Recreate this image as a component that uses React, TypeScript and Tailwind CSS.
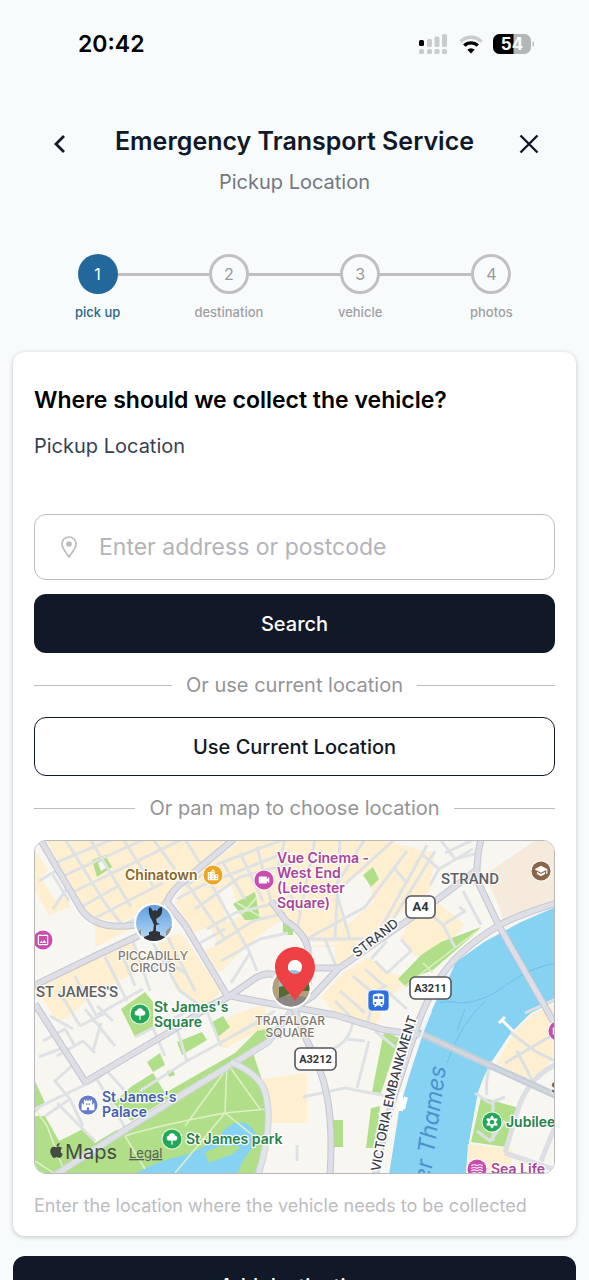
import { FaApple } from "react-icons/fa";
import {
  MdCastle,
  MdFilterVintage,
  MdLocationCity,
  MdOutlineImage,
  MdSchool,
  MdTrain,
  MdVideocam,
  MdWaves,
} from "react-icons/md";
import type { ComponentType, SVGProps } from "react";

const STEPS = ["pick up", "destination", "vehicle", "photos"];

function StatusBar() {
  return (
    <div className="flex flex-row justify-between items-center h-22 pl-[78px] pr-[54px]">
      <span className="text-[23px] font-semibold text-black">20:42</span>
      <div className="flex flex-row items-center gap-2.5">
        <svg width="30" height="20" viewBox="0 0 30 20" fill="#c9cccd">
          <rect x="0" y="6" width="5" height="6" rx="1.5" fill="#000" />
          <rect x="8" y="5" width="5" height="8" rx="1.5" />
          <rect x="15.5" y="2.5" width="5" height="10.5" rx="1.5" />
          <rect x="23" y="0" width="5" height="13" rx="1.5" />
          <rect x="0" y="15" width="5" height="5" rx="1.5" />
          <rect x="8" y="15" width="5" height="5" rx="1.5" />
          <rect x="15.5" y="15" width="5" height="5" rx="1.5" />
          <rect x="23" y="15" width="5" height="5" rx="1.5" />
        </svg>
        <svg width="24" height="19" viewBox="0 0 24 19" fill="none">
          <path d="M1.5 6.5a15 15 0 0 1 21 0" stroke="#c9cccd" strokeWidth="3.4" />
          <path d="M5.3 10.6a9.5 9.5 0 0 1 13.4 0" stroke="#000" strokeWidth="3.4" />
          <path d="M12 18.6l-3.7-3.9a5.3 5.3 0 0 1 7.4 0z" fill="#000" />
        </svg>
        <svg width="42" height="20" viewBox="0 0 42 20">
          <defs>
            <clipPath id="battery">
              <rect width="38" height="20" rx="6.5" />
            </clipPath>
          </defs>
          <g clipPath="url(#battery)">
            <rect width="38" height="20" fill="#b4b7b8" />
            <rect width="20.5" height="20" fill="#000" />
          </g>
          <path d="M39.5 7v6c2-.6 2-5.4 0-6z" fill="#b4b7b8" />
          <text
            x="19"
            y="16"
            textAnchor="middle"
            fontSize="17"
            fontWeight="700"
            fill="#fff"
          >
            54
          </text>
        </svg>
      </div>
    </div>
  );
}

function Header() {
  return (
    <header className="flex flex-row justify-between items-start px-12 pt-9">
      <button type="button" aria-label="Back" className="pt-2">
        <svg width="24" height="24" viewBox="0 0 24 24" fill="none">
          <path d="M16 4L8 12l8 8" stroke="#111827" strokeWidth="2.8" />
        </svg>
      </button>
      <div className="flex flex-col items-center gap-2">
        <h1 className="text-[25px] leading-[34px] font-semibold text-[#111827]">
          Emergency Transport Service
        </h1>
        <p className="text-xl leading-8 text-[#737880]">Pickup Location</p>
      </div>
      <button type="button" aria-label="Close" className="pt-2">
        <svg width="24" height="24" viewBox="0 0 24 24" fill="none">
          <path d="M3.5 3.5l17 17M20.5 3.5l-17 17" stroke="#111827" strokeWidth="2.4" />
        </svg>
      </button>
    </header>
  );
}

function Stepper() {
  return (
    <ol className="grid grid-cols-4 px-8 pt-14">
      {STEPS.map((step, i) => (
        <li key={step} className="flex flex-col items-center gap-2">
          <div className="flex flex-row items-center w-full">
            <span
              className={
                i === 0 ? "flex-1 h-[3px]" : "flex-1 h-[3px] bg-[#c0bfc4]"
              }
            />
            <span
              className={
                i === 0
                  ? "flex items-center justify-center size-10 rounded-full text-base text-white bg-[#22689a]"
                  : "flex items-center justify-center size-10 rounded-full text-base text-[#98989a] border-3 border-[#c0bfc4]"
              }
            >
              {i + 1}
            </span>
            <span
              className={
                i === STEPS.length - 1
                  ? "flex-1 h-[3px]"
                  : "flex-1 h-[3px] bg-[#c0bfc4]"
              }
            />
          </div>
          <span
            className={
              i === 0
                ? "text-[13px] leading-5 font-medium text-[#2a6687]"
                : "text-[13px] leading-5 font-medium text-[#a0a0a2]"
            }
          >
            {step}
          </span>
        </li>
      ))}
    </ol>
  );
}

function Divider({ label }: { label: string }) {
  return (
    <div className="flex flex-row items-center gap-3.5 h-16">
      <span className="flex-1 h-px bg-[#bdbdbf]" />
      <span className="text-xl text-[#949496]">{label}</span>
      <span className="flex-1 h-px bg-[#bdbdbf]" />
    </div>
  );
}

type IconProps = SVGProps<SVGSVGElement> & { size?: number };

function Tree({ size, color, ...rest }: IconProps) {
  return (
    <svg {...rest} width={size} height={size} viewBox="0 0 24 24" fill={color}>
      <path d="M12 2C8.5 2 7 4.5 7 6C4 6.5 2.5 8.5 3 11.5C3.5 14 5.5 15 8 14.5L11 15V22H13V15L16 14.5C18.5 15 20.5 14 21 11.5C21.5 8.5 20 6.5 17 6C17 4.5 15.5 2 12 2Z" />
    </svg>
  );
}

type PoiProps = {
  x: number;
  y: number;
  color: string;
  icon: ComponentType<IconProps>;
};

function Poi({ x, y, color, icon: Icon }: PoiProps) {
  return (
    <g>
      <circle cx={x} cy={y} r="10.5" fill="#fff" opacity="0.8" />
      <circle cx={x} cy={y} r="9.5" fill={color} />
      <Icon x={x - 7} y={y - 7} size={14} color="#fff" />
    </g>
  );
}

type LabelProps = {
  x: number;
  y: number;
  lines: string[];
  color: string;
};

function PlaceLabel({ x, y, lines, color }: LabelProps) {
  return (
    <text
      fontSize="14"
      fontWeight="600"
      fill={color}
      stroke="#fff"
      strokeWidth="2.5"
      strokeOpacity="0.85"
      paintOrder="stroke"
    >
      {lines.map((line, i) => (
        <tspan key={line} x={x} y={y + i * 15}>
          {line}
        </tspan>
      ))}
    </text>
  );
}

function AreaLabel({ x, y, lines }: Omit<LabelProps, "color">) {
  return (
    <text
      fontSize="12"
      fontWeight="500"
      fill="#7d7972"
      textAnchor="middle"
      stroke="#fff"
      strokeWidth="2"
      strokeOpacity="0.8"
      paintOrder="stroke"
    >
      {lines.map((line, i) => (
        <tspan key={line} x={x} y={y + i * 12}>
          {line}
        </tspan>
      ))}
    </text>
  );
}

type RoadShieldProps = {
  x: number;
  y: number;
  width: number;
  name: string;
};

function RoadShield({ x, y, width, name }: RoadShieldProps) {
  return (
    <g>
      <rect x={x} y={y} width={width} height="22" rx="5" fill="#fff" stroke="#55565a" strokeWidth="1.6" />
      <text
        x={x + width / 2}
        y={y + 15}
        textAnchor="middle"
        fontFamily="Roboto, sans-serif"
        fontSize={name.length > 2 ? 11 : 13}
        fontWeight="700"
        fill="#333438"
      >
        {name}
      </text>
    </g>
  );
}

const MAJOR_ROADS = [
  "M5-2L46 68C58 86 80 87 100 84L117 78L132 61Q136 50 150 39L199-2",
  "M-2 145L60 115L103 95L117 82",
  "M131 60L150 84L193 156",
  "M190 154L232 162L262 167L300 174L349 189L384 194",
  "M50 241L143 186L175 165L193 156L222 136Q240 128 246 141",
  "M0 163L51 242",
  "M258 165L272 200Q287 228 292 255Q298 285 295 335",
  "M262 165L278 155L303 128L369 82L403 58L443 28",
  "M446-2Q440 25 443 41L463 83L521 185",
  "M522 62Q480 75 463 85Q425 108 407 134Q392 158 384 180Q372 215 356 265Q346 305 340 335",
  "M236 60L251 80Q270 92 273 108L273 145",
  "M275 127H303",
];

const STREETS = [
  "M30-2L70 62L86 82M55-2L96 66M88-2L118 45M118-2L140 28M150-2L165 22M20 22L78-2M28 35L110-2M36 52L148-2M46 66L85 44M58 78L128 42M92 82L130 66",
  "M18 68L34 44M34 60L18 34M4 40L24 28",
  "M150 45L185 22L250-2M142 58L168 44L255 10M160 68L205 36L258 22M172 88L200 72L250 60M180 104L218 80L250 72M186 120L225 98L253 92M196 142L215 112M215 112L222 130M150 40L190 98M170 32L215 112M188 22L210 58M205 12L228 60M222 6L236 60M165 102L190 88",
  "M250-2L242 30L262 66M280-2L262 88M305-2L300 98M330-2L300 46L315 98M360-2L300 52M372 10L330 66L272 98M392 4L340 98M400 10L352 88L316 108M300 98H272M302 128L290 98H330",
  "M405-2L420 18L443 12M410 12L440-2M388 14L404 28L438 8M395 44L404 28M360 28L372 42M392 70L408 84L430 70L424 66M408 84L420 106M428 50L446 84",
  "M352 100L336 118M340 120L352 132L376 110L366 98M330 128L350 146M318 135L338 152L352 144M305 150L330 172M300 160L318 178M340 152L332 184M352 150L372 168",
  "M40 135L62 176M70 116L92 160M85 108L100 145M60 175L108 148M24 150L45 185M45 185L70 172M98 100L115 150M118 102L145 150L170 168M132 95L160 150M50 168L80 205M62 165L78 180M112 130L132 120L150 132",
  "M15 175L38 188M8 200L30 188L40 205M22 215L48 200L60 212M66 182L58 210M4 216L25 208M62 238L72 230L90 250M35 258L20 240L40 222M0 268L62 238M10 275L35 258L48 285M22 262L60 300M62 238L92 290",
  "M100 196L118 187L130 215M118 187L150 172M140 182L152 220L196 196M170 166L186 205M152 220L105 250M196 196L240 170M226 180L196 196",
  "M300 174L318 180Q315 200 298 208L290 230M310 198L330 200M334 200L322 247M268 256L310 247L352 255M262 304V320M340 190L360 206",
];

const SOUTH_BANK_STREETS = [
  "M476 192L500 210L524 222M470 222L524 190M456 220Q450 240 452 254M500 245L482 210M521 158L490 172",
  "M440 252L455 262L470 256M442 290L455 300L470 280M458 262V300",
];

const PARK_PATHS = [
  "M192 222L190 272L140 332M190 272Q120 285 90 295M90 295L110 328M192 222L225 268M190 272L232 268M190 272L225 300M0 268L12 285L30 332M20 332L60 312M0 320L22 334M150 285L190 230",
  "M206 74L222 56M202 62L226 76",
  "M370 145L442 90M388 122L398 132",
];

function LocationMap() {
  return (
    <div className="rounded-xl border border-[#b9b9bb] overflow-hidden">
      <svg viewBox="0 0 519 332" className="block w-full h-auto" fill="none">
        <defs>
          <linearGradient id="sky" x1="0" y1="0" x2="0" y2="1">
            <stop offset="0" stopColor="#5c9ce0" />
            <stop offset="1" stopColor="#bcdcf4" />
          </linearGradient>
          <clipPath id="circus">
            <circle cx="119" cy="82" r="18" />
          </clipPath>
          <clipPath id="trafalgar">
            <circle cx="256" cy="147" r="18.5" />
          </clipPath>
          <path id="embankment" d="M345 331C353 285 362 235 385 168" />
        </defs>

        <rect width="520" height="332" fill="#f8f6f1" />

        {/* built-up blocks */}
        <g fill="#fdefd0">
          <path d="M12 0H192L134 56L118 70L88 80L60 78L46 62L28 30Z" />
          <path d="M0 10L22 42L36 66L14 74L0 50Z" />
          <path d="M204 0H300L350 0L400 12L395 50L345 88L318 104L272 100L250 76L222 96L184 132L140 62L150 44Z" />
          <path d="M300 104L330 92L312 120L304 126H278V104Z" />
          <path d="M374 82L404 62L430 84L412 104L380 116L366 96Z" />
          <path d="M308 132L340 112L352 132L376 136L352 160L340 186L300 172L286 156Z" />
          <path d="M0 148L98 100L112 126L60 152L38 172L24 182Z" />
          <path d="M122 100L146 92L186 150L172 166L140 148Z" />
          <path d="M195 175L228 164L236 184L188 208L180 196Z" />
          <path d="M228 238L272 232V282H236Z" />
          <path d="M60 82L96 88L60 106Z" />
        </g>
        <g fill="#f8f6f1">
          <path d="M6 36L20 24L34 46L20 60Z" />
          <path d="M184 50L196 44L206 74L192 82Z" />
          <path d="M222 100L268 98L270 142L240 128L214 142L196 148Z" />
          <path d="M300 48L330 30L340 60L312 84Z" />
          <path d="M276 106H300V124H276Z" />
          <path d="M326 112L346 100L366 106L350 128Z" />
          <path d="M150 94L176 86L182 104L162 112Z" />
          <path d="M395 36L440 12L446 60L424 74L404 56Z" />
        </g>
        <path d="M462 60L446 26L452 0H521V60L468 78Z" fill="#f5eadb" />
        <path d="M452 0H500L470 20L450 34L446 26Z" fill="#f8f6f1" />

        {/* parks */}
        <g fill="#b1df89">
          <path d="M57 19L70 14L77 26L62 36Z" />
          <path d="M198 63L220 51L225 79L210 79Z" />
          <path d="M328 34L338 26L344 38L336 46Z" />
          <path d="M248 80L258 84V94H248Z" />
          <path d="M363 138L386 114L406 101L446 86L436 96L398 129L385 134L371 146Z" />
          <path d="M86 168L110 151L118 161V186L100 196Z" />
          <path d="M142 201L167 191L172 199L147 214Z" />
          <path d="M175 182L188 175L195 186L183 196Z" />
          <path d="M112 221L125 212L130 224L118 231Z" />
          <path d="M97 245L118 232L130 252L200 212L222 190L238 186L240 196L200 218L96 280L78 262Z" />
          <path d="M0 240L10 262L0 272Z" />
          <path d="M0 275L10 275L24 300L52 286L90 290L200 220L216 206L227 239L235 276L222 334H0Z" />
          <path d="M349 190L364 197L346 252L337 251Z" />
          <path d="M336 267L345 265L341 307L331 307Z" />
          <path d="M298 279L308 279V306H298Z" />
        </g>
        <path d="M63 22L69 19L73 26L66 30Z" fill="#f8f6f1" />
        <path d="M48 286L78 262L90 284L60 302Z" fill="#f8f6f1" />
        <path d="M132 230L138 228L140 234L134 236Z" fill="#b1df89" />

        {/* lake */}
        <path
          d="M98 334Q120 320 150 314Q178 304 188 290Q200 278 212 283Q224 290 220 304Q208 316 202 334Z"
          fill="#86d2f2"
        />
        <path d="M170 312Q184 302 206 306L196 314Q182 318 174 322Z" fill="#b1df89" />

        {/* roads */}
        <g stroke="#dfe2e5" strokeWidth="3" strokeLinejoin="round">
          {STREETS.map((d) => (
            <path key={d} d={d} />
          ))}
        </g>
        <g stroke="#dff0c9" strokeWidth="1.5">
          {PARK_PATHS.map((d) => (
            <path key={d} d={d} />
          ))}
        </g>
        <path d="M20 334L90 289L233 201L258 168" stroke="#cfd3d9" strokeWidth="7" />
        <path d="M20 334L90 289L233 201L258 168" stroke="#dee1e6" strokeWidth="5" />
        <path d="M196 221Q222 232 229 248Q240 280 223 334" stroke="#cfd3d9" strokeWidth="7" />
        <path d="M196 221Q222 232 229 248Q240 280 223 334" stroke="#e1e4e9" strokeWidth="5" />

        {/* river and south bank */}
        <path
          d="M521 66L486 81L449 101L421 121L413 138Q396 165 385 202Q372 240 364 270L354 334H431L434 302L443 252Q448 236 456 222L476 192L496 172L521 160Z"
          fill="#86d2f2"
        />
        <path d="M521 122C480 130 470 150 446 158C425 166 415 158 405 162M450 160Q424 185 412 222M430 168L422 190" stroke="#6cc0e6" strokeWidth="1" />
        <path d="M476 192L496 172L521 160V334H431L434 302L443 252Q448 236 456 222Z" fill="#f8f6f1" />
        <path d="M478 192L498 173L521 163V212L498 244L462 222Z" fill="#fdefd0" />
        <path d="M433 303L478 308L474 334H431Z" fill="#fdefd0" />
        <path d="M446 256L484 267L471 306L436 301Z" fill="#b1df89" />
        <g stroke="#dcdfe3" strokeWidth="3">
          {SOUTH_BANK_STREETS.map((d) => (
            <path key={d} d={d} />
          ))}
          <path d="M524 222Q492 236 482 272Q474 298 470 312M470 312L524 330M524 276L506 320" strokeWidth="5" />
          <path d="M380 190L524 256" strokeWidth="7" stroke="#c3ced8" />
          <path d="M380 190L524 256" strokeWidth="3" stroke="#d3d7dd" />
          <path d="M464 182L470 176M467 179L478 190" stroke="#fff" />
          <path d="M366 252V270M371 256L368 268" stroke="#fff" strokeWidth="4" />
          <path d="M396 170L384 200M400 158L412 134" stroke="#eaf6fb" strokeWidth="2" />
        </g>
        <g stroke="#c5c6d0" strokeWidth="7" strokeLinejoin="round">
          {MAJOR_ROADS.map((d) => (
            <path key={d} d={d} />
          ))}
        </g>
        <g stroke="#dddee6" strokeWidth="5" strokeLinejoin="round">
          {MAJOR_ROADS.map((d) => (
            <path key={d} d={d} />
          ))}
        </g>

        {/* landmarks */}
        <circle cx="119" cy="82" r="20" fill="#fff" />
        <g clipPath="url(#circus)">
          <rect x="100" y="63" width="38" height="38" fill="url(#sky)" />
          <path d="M100 94L106 88V102H100ZM138 84L131 90V102H138Z" fill="#9a958c" />
          <path
            d="M114 66Q117 67 118 70L120 69L122 70Q124 66 127 66Q128 73 124 76L121 78L122 82L125 83L121 84L121 90L125 91V94L130 96V102H109V96L114 94V91L118 90L119 84L117 79Q113 74 114 66Z"
            fill="#2f3237"
          />
        </g>
        <circle cx="256" cy="147" r="20.5" fill="#fff" />
        <g clipPath="url(#trafalgar)">
          <rect x="236" y="127" width="40" height="40" fill="#8fc0ea" />
          <path d="M236 136L244 134V146L258 150L268 144L276 140V168H236Z" fill="#b3a07c" />
          <path d="M244 146L252 144L256 152L244 158ZM266 142L272 138L276 150L268 150Z" fill="#546a35" />
          <path d="M236 160Q256 150 276 158V168H236Z" fill="#8d8683" />
        </g>

        <Poi x={178} y={34} color="#eba624" icon={MdLocationCity} />
        <Poi x={229} y={39} color="#cb4bb0" icon={MdVideocam} />
        <Poi x={8} y={99} color="#cb4bb0" icon={MdOutlineImage} />
        <Poi x={506} y={30} color="#8a6549" icon={MdSchool} />
        <Poi x={105} y={173} color="#23a85a" icon={Tree} />
        <Poi x={53} y={264} color="#657dcb" icon={MdCastle} />
        <Poi x={137} y={298} color="#23a85a" icon={Tree} />
        <Poi x={457} y={281} color="#23a85a" icon={MdFilterVintage} />
        <Poi x={442} y={328} color="#cb4bb0" icon={MdWaves} />
        <Poi x={523} y={190} color="#cb4bb0" icon={MdVideocam} />
        <rect x="333" y="149" width="21" height="21" rx="4" fill="#2e6fe0" stroke="#fff" strokeOpacity="0.7" />
        <MdTrain x={335} y={151} size={17} color="#fff" />

        <PlaceLabel x={90} y={39} lines={["Chinatown"]} color="#87691f" />
        <PlaceLabel
          x={242}
          y={22}
          lines={["Vue Cinema -", "West End", "(Leicester", "Square)"]}
          color="#a9449b"
        />
        <PlaceLabel x={119} y={171} lines={["St James's", "Square"]} color="#26804a" />
        <PlaceLabel x={67} y={261} lines={["St James's", "Palace"]} color="#445fae" />
        <PlaceLabel x={151} y={303} lines={["St James park"]} color="#26804a" />
        <PlaceLabel x={471} y={286} lines={["Jubilee"]} color="#26804a" />
        <PlaceLabel x={456} y={333} lines={["Sea Life"]} color="#a9449b" />
        <AreaLabel x={118} y={119} lines={["PICCADILLY", "CIRCUS"]} />
        <AreaLabel x={255} y={184} lines={["TRAFALGAR", "SQUARE"]} />

        <g
          fontFamily="Roboto, sans-serif"
          fontSize="15"
          fontWeight="500"
          fill="#606166"
          stroke="#fff"
          strokeWidth="2"
          strokeOpacity="0.8"
          paintOrder="stroke"
        >
          <text x="406" y="43">STRAND</text>
          <text x="1" y="156">ST JAMES'S</text>
          <text x="516" y="252">S</text>
        </g>
        <g
          fontSize="13"
          fontWeight="500"
          fill="#3c3d4c"
          stroke="#fff"
          strokeWidth="3"
          paintOrder="stroke"
        >
          <text transform="translate(322 117) rotate(-38)">STRAND</text>
          <text>
            <textPath href="#embankment">VICTORIA EMBANKMENT</textPath>
          </text>
        </g>
        <text
          transform="translate(411 226) rotate(-82)"
          textAnchor="end"
          fontSize="23"
          fontStyle="italic"
          fill="#4b93cf"
        >
          River Thames
        </text>

        <RoadShield x={371} y={55} width={29} name="A4" />
        <RoadShield x={375} y={136} width={41} name="A3211" />
        <RoadShield x={260} y={207} width={41} name="A3212" />

        {/* selected point */}
        <path
          fillRule="evenodd"
          d="M260 106C249 106 240 115 240 126C240 140 252 147 260 160C268 147 280 140 280 126C280 115 271 106 260 106ZM260 119A7 7 0 1 1 260 133A7 7 0 1 1 260 119Z"
          fill="#ee4146"
        />
        <path d="M253 126A7 7 0 0 1 267 126L265 130Q258 128 254 130Z" fill="#fff" />

        <FaApple x={13} y={301} size={17} color="#454b42" />
        <text x="30" y="318" fontSize="20" fill="#454b42">
          Maps
        </text>
        <a href="#legal">
          <text x="94" y="317" fontSize="13" fill="#5a6157" textDecoration="underline">
            Legal
          </text>
        </a>
      </svg>
    </div>
  );
}

export default function App() {
  return (
    <main className="min-h-screen bg-[#f7fbfc] font-[Inter,sans-serif]">
      <StatusBar />
      <Header />
      <Stepper />
      <div className="px-[13px] pt-[30px] pb-5">
        <section className="bg-white rounded-xl shadow-[0_1px_5px_rgba(0,0,0,0.22)] px-[21px] pt-8 pb-3.5">
          <h2 className="text-[23px] leading-8 font-semibold text-black">
            Where should we collect the vehicle?
          </h2>
          <label
            htmlFor="address"
            className="block mt-3.5 text-xl leading-8 text-[#374151]"
          >
            Pickup Location
          </label>
          <div className="flex flex-row items-center gap-5 mt-13 h-[66px] px-6 rounded-xl border border-[#bdbdc0]">
            <svg width="20" height="24" viewBox="0 0 20 24" fill="none">
              <path
                d="M10 2C5.8 2 3 5 3 9C3 13.5 7 17.5 10 22C13 17.5 17 13.5 17 9C17 5 14.2 2 10 2Z"
                stroke="#bcbcbe"
                strokeWidth="1.7"
              />
              <circle cx="10" cy="9" r="2.8" fill="#bcbcbe" />
            </svg>
            <input
              id="address"
              type="text"
              placeholder="Enter address or postcode"
              className="flex-1 min-w-0 text-[23px] text-[#111827] placeholder:text-[#b3b4b9] outline-none"
            />
          </div>
          <button
            type="button"
            className="w-full h-[59px] mt-3.5 rounded-xl text-xl font-medium text-white bg-[#111827]"
          >
            Search
          </button>
          <Divider label="Or use current location" />
          <button
            type="button"
            className="w-full h-[59px] rounded-xl border border-[#111827] text-xl font-medium text-[#111827]"
          >
            Use Current Location
          </button>
          <Divider label="Or pan map to choose location" />
          <LocationMap />
          <p className="mt-4 text-lg leading-8 text-[#bcbcbe]">
            Enter the location where the vehicle needs to be collected
          </p>
        </section>
        <button
          type="button"
          className="w-full h-[59px] mt-5 rounded-xl text-xl font-medium text-white bg-[#111827]"
        >
          Add destination
        </button>
      </div>
    </main>
  );
}
